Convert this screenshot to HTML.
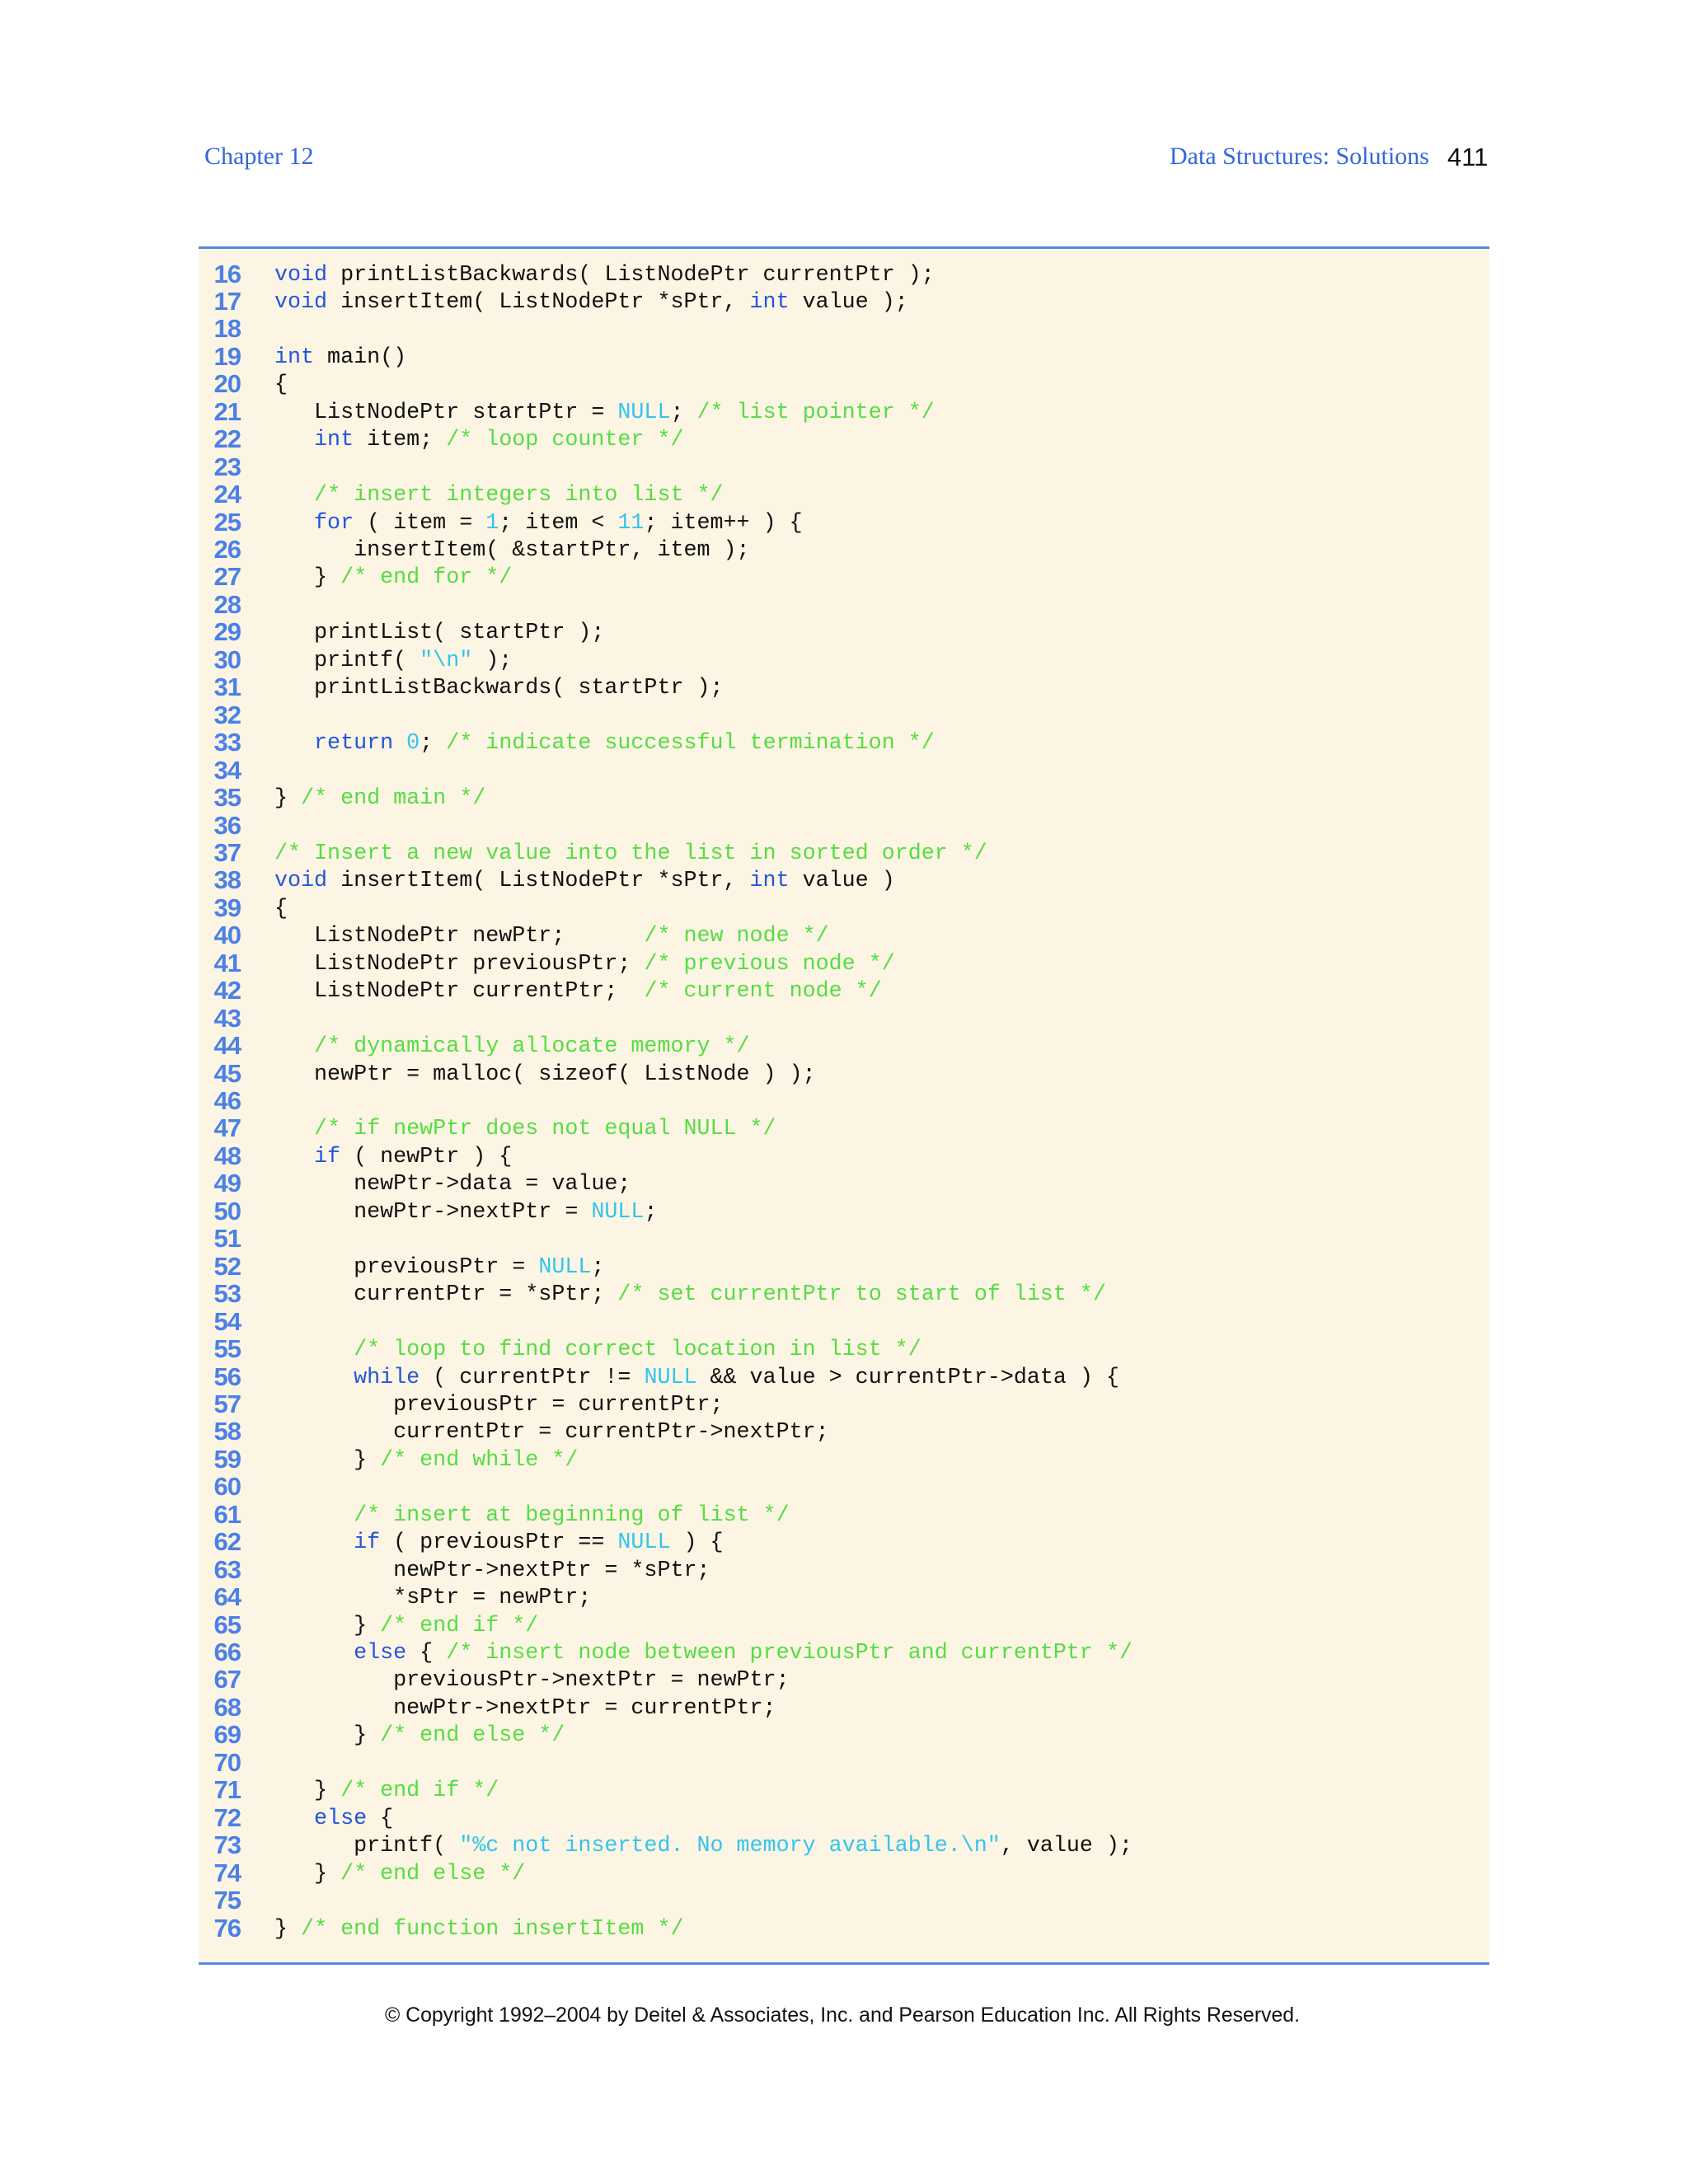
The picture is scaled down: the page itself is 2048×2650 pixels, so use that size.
<!DOCTYPE html>
<html><head><meta charset="utf-8">
<style>
html,body{margin:0;padding:0;background:#fff;}
body{width:2048px;height:2650px;position:relative;overflow:hidden;}
.hdr{position:absolute;font-family:"Liberation Serif",serif;font-size:30px;color:#3366dd;line-height:1;}
.pg{position:absolute;font-family:"Liberation Sans",sans-serif;font-size:31px;color:#111;line-height:1;}
.box{position:absolute;left:241px;top:299px;width:1566px;height:2085px;background:#fdf5e3;border-top:3px solid #5588e6;border-bottom:3px solid #5588e6;box-sizing:border-box;}
.ln{position:absolute;left:236px;width:56px;text-align:right;font-family:"Liberation Sans",sans-serif;font-weight:bold;font-size:31px;letter-spacing:-1px;color:#4a80e8;height:33.45px;line-height:33.45px;}
.cd{position:absolute;left:333px;font-family:"Liberation Mono",monospace;font-size:26.7px;color:#111;white-space:pre;height:33.45px;line-height:33.45px;}
.k{color:#2255dd}.c{color:#55dd44}.l{color:#33c4ee}
.copy{position:absolute;left:467px;top:2432px;font-family:"Liberation Sans",sans-serif;font-size:24.8px;color:#111;white-space:nowrap;}
</style></head><body>
<div class="hdr" style="left:248px;top:175px;">Chapter 12</div>
<div class="hdr" style="left:1419px;top:175px;width:316px;">Data Structures: Solutions</div>
<div class="pg" style="left:1756px;top:175px;">411</div>
<div class="box"></div>
<div id="code"></div>
<div class="copy">© Copyright 1992–2004 by Deitel &amp; Associates, Inc. and Pearson Education Inc. All Rights Reserved.</div>
<script>
var L=[
'<span class="k">void</span> printListBackwards( ListNodePtr currentPtr );',
'<span class="k">void</span> insertItem( ListNodePtr *sPtr, <span class="k">int</span> value );',
'',
'<span class="k">int</span> main()',
'{',
'   ListNodePtr startPtr = <span class="l">NULL</span>; <span class="c">/* list pointer */</span>',
'   <span class="k">int</span> item; <span class="c">/* loop counter */</span>',
'',
'   <span class="c">/* insert integers into list */</span>',
'   <span class="k">for</span> ( item = <span class="l">1</span>; item &lt; <span class="l">11</span>; item++ ) {',
'      insertItem( &amp;startPtr, item );',
'   } <span class="c">/* end for */</span>',
'',
'   printList( startPtr );',
'   printf( <span class="l">"\\n"</span> );',
'   printListBackwards( startPtr );',
'',
'   <span class="k">return</span> <span class="l">0</span>; <span class="c">/* indicate successful termination */</span>',
'',
'} <span class="c">/* end main */</span>',
'',
'<span class="c">/* Insert a new value into the list in sorted order */</span>',
'<span class="k">void</span> insertItem( ListNodePtr *sPtr, <span class="k">int</span> value )',
'{',
'   ListNodePtr newPtr;      <span class="c">/* new node */</span>',
'   ListNodePtr previousPtr; <span class="c">/* previous node */</span>',
'   ListNodePtr currentPtr;  <span class="c">/* current node */</span>',
'',
'   <span class="c">/* dynamically allocate memory */</span>',
'   newPtr = malloc( sizeof( ListNode ) );',
'',
'   <span class="c">/* if newPtr does not equal NULL */</span>',
'   <span class="k">if</span> ( newPtr ) {',
'      newPtr-&gt;data = value;',
'      newPtr-&gt;nextPtr = <span class="l">NULL</span>;',
'',
'      previousPtr = <span class="l">NULL</span>;',
'      currentPtr = *sPtr; <span class="c">/* set currentPtr to start of list */</span>',
'',
'      <span class="c">/* loop to find correct location in list */</span>',
'      <span class="k">while</span> ( currentPtr != <span class="l">NULL</span> &amp;&amp; value &gt; currentPtr-&gt;data ) {',
'         previousPtr = currentPtr;',
'         currentPtr = currentPtr-&gt;nextPtr;',
'      } <span class="c">/* end while */</span>',
'',
'      <span class="c">/* insert at beginning of list */</span>',
'      <span class="k">if</span> ( previousPtr == <span class="l">NULL</span> ) {',
'         newPtr-&gt;nextPtr = *sPtr;',
'         *sPtr = newPtr;',
'      } <span class="c">/* end if */</span>',
'      <span class="k">else</span> { <span class="c">/* insert node between previousPtr and currentPtr */</span>',
'         previousPtr-&gt;nextPtr = newPtr;',
'         newPtr-&gt;nextPtr = currentPtr;',
'      } <span class="c">/* end else */</span>',
'',
'   } <span class="c">/* end if */</span>',
'   <span class="k">else</span> {',
'      printf( <span class="l">"%c not inserted. No memory available.\\n"</span>, value );',
'   } <span class="c">/* end else */</span>',
'',
'} <span class="c">/* end function insertItem */</span>'
];
var h='';
for(var i=0;i<L.length;i++){
 var t=(317.5+i*33.45).toFixed(2);
 h+='<div class="ln" style="top:'+(t-2)+'px">'+(16+i)+'</div><div class="cd" style="top:'+t+'px">'+L[i]+'</div>';
}
document.getElementById('code').innerHTML=h;
</script>
</body></html>
